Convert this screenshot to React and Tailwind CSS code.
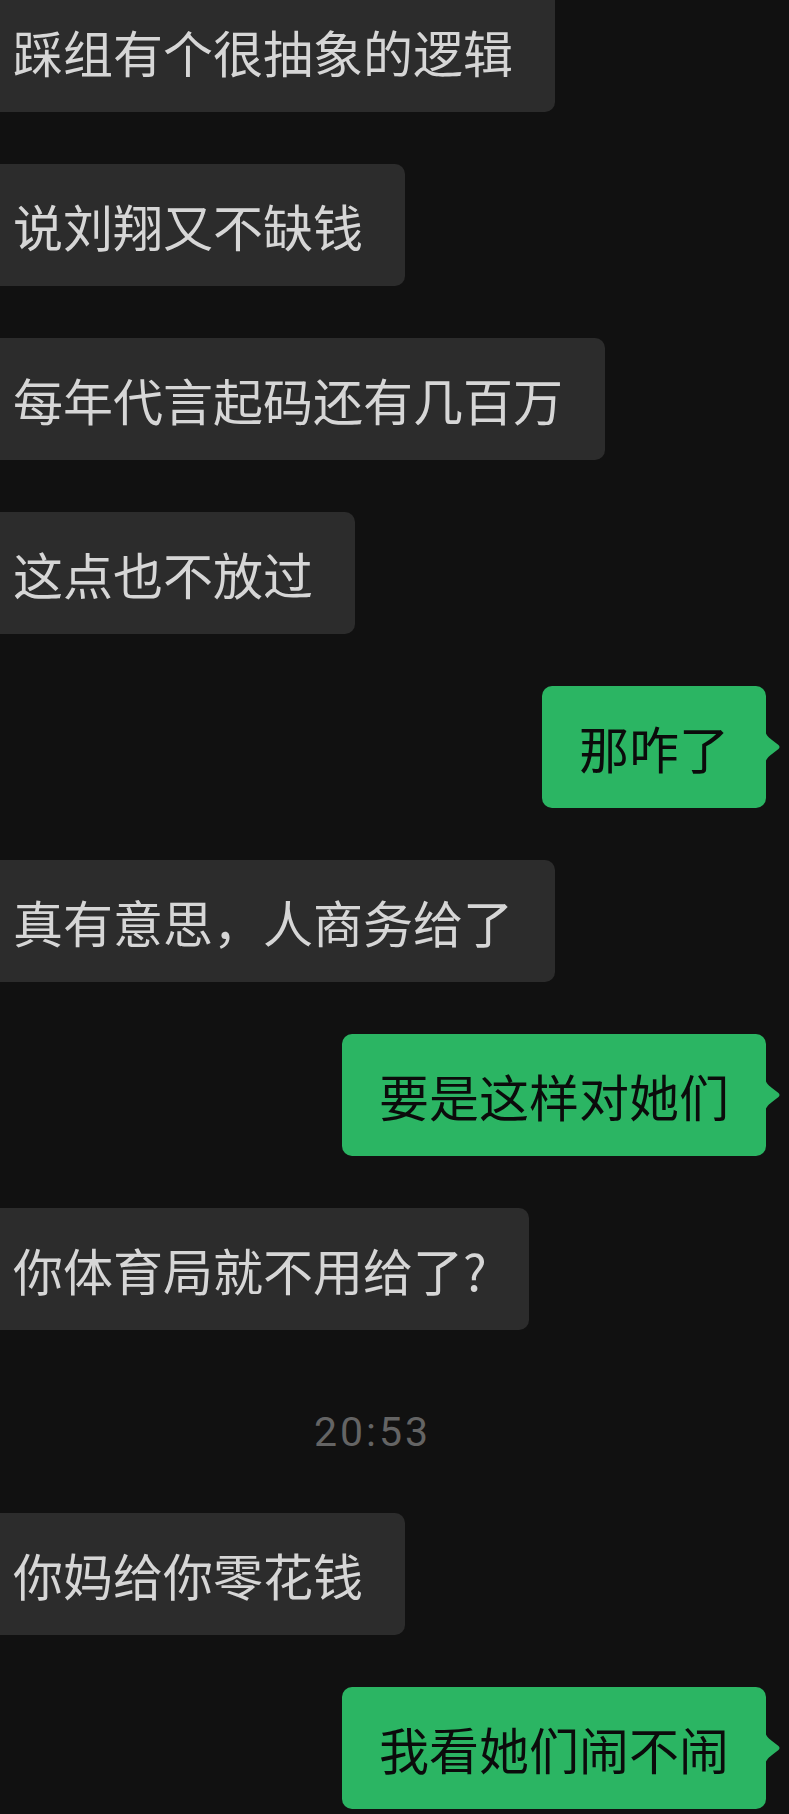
import React from "react";

const messages = [
  { from: "them", text: "踩组有个很抽象的逻辑" },
  { from: "them", text: "说刘翔又不缺钱" },
  { from: "them", text: "每年代言起码还有几百万" },
  { from: "them", text: "这点也不放过" },
  { from: "me", text: "那咋了" },
  { from: "them", text: "真有意思，人商务给了" },
  { from: "me", text: "要是这样对她们" },
  { from: "them", text: "你体育局就不用给了?" },
  { time: "20:53" },
  { from: "them", text: "你妈给你零花钱" },
  { from: "me", text: "我看她们闹不闹" },
];

const cjk = { fontFamily: '"Noto Sans CJK SC", "Noto Sans", sans-serif' };

function Tail() {
  return (
    <svg width="15" height="38" viewBox="0 0 15 38" className="shrink-0">
      <path
        d="M0 0 C0 6 3 9 7 12 L13.5 17 Q15.5 19 13.5 21 L7 26 C3 29 0 32 0 38 Z"
        fill="#2bb563"
      />
    </svg>
  );
}

function Bubble({ msg }) {
  if (msg.time) {
    return (
      <div className="flex justify-center pr-[44px] pt-[30px] pb-[8px]">
        <span
          className="text-[41px] leading-[41px] tracking-[3px] text-[#646464]"
          style={{ fontFamily: "Roboto, sans-serif" }}
        >
          {msg.time}
        </span>
      </div>
    );
  }

  if (msg.from === "me") {
    return (
      <div className="flex justify-end items-center pr-[9px]">
        <div
          className="bg-[#2bb563] text-[#0b0b0b] text-[50px] leading-[50px] py-[36px] px-[37px] rounded-[10px] whitespace-nowrap"
          style={cjk}
        >
          {msg.text}
        </div>
        <div className="-ml-px">
          <Tail />
        </div>
      </div>
    );
  }

  return (
    <div className="flex justify-start">
      <div
        className="bg-[#2c2c2c] text-[#d6d6d6] text-[50px] leading-[50px] py-[36px] pl-[13px] pr-[42px] rounded-r-[10px] whitespace-nowrap"
        style={cjk}
      >
        {msg.text}
      </div>
    </div>
  );
}

export default function App() {
  return (
    <div className="w-[789px] h-[1814px] bg-[#111111] overflow-hidden">
      <div className="flex flex-col gap-[52px] -mt-[10px]">
        {messages.map((m, i) => (
          <Bubble key={i} msg={m} />
        ))}
      </div>
    </div>
  );
}
